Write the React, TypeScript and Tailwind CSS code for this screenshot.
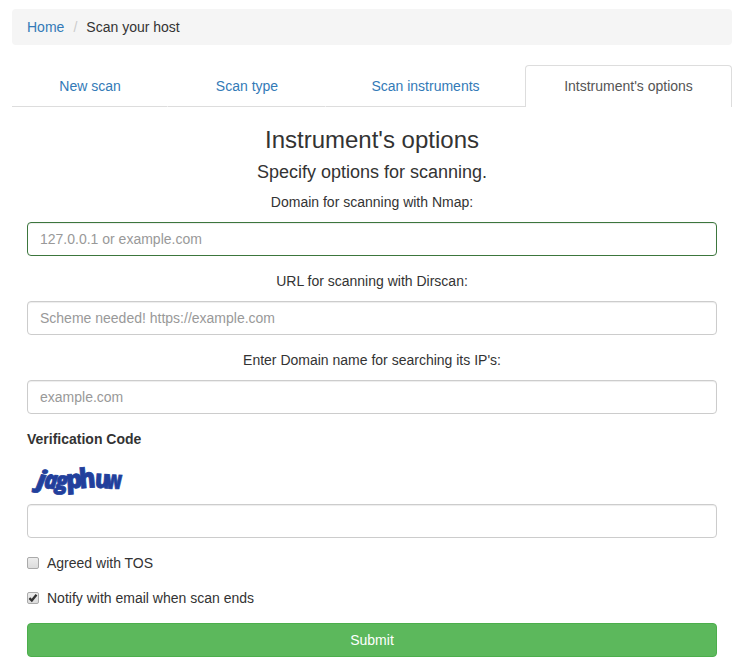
import React from 'react';

const tabs = [
  { label: 'New scan', width: 'w-[156px]', last: false },
  { label: 'Scan type', width: 'w-[158px]', last: false },
  { label: 'Scan instruments', width: 'w-[199px]', last: true },
];

const captcha = [
  { ch: 'j', t: 'translate(9 33) rotate(8) scale(1.2 1.08)', italic: true },
  { ch: 'a', t: 'translate(16.5 34) rotate(6) scale(1 1.15)', italic: true },
  { ch: 'g', t: 'translate(28 34.5) rotate(4) scale(1.02 1.1)', italic: true },
  { ch: 'p', t: 'translate(39.5 34.5) rotate(-3) scale(1.15 1.15)', italic: false },
  { ch: 'h', t: 'translate(53 34.5) rotate(-5) scale(1.1 1.25)', italic: false },
  { ch: 'u', t: 'translate(67.5 33.5) rotate(4) scale(1 1.15)', italic: false },
  { ch: 'w', t: 'translate(78.5 34.5) rotate(2) scale(.82 1.15)', italic: false },
];

function Field({ label, placeholder, success }: { label: string; placeholder: string; success?: boolean }) {
  return (
    <label className="mb-[15px] block text-center">
      <span className="mb-[10px] block">{label}</span>
      <input
        placeholder={placeholder}
        className={`block h-[34px] w-full rounded-[4px] border px-3 py-[6px] text-[14px] leading-5 shadow-[inset_0_1px_1px_rgba(0,0,0,0.075)] outline-none placeholder:text-[#999] ${
          success ? 'border-[#3c763d]' : 'border-[#ccc]'
        }`}
      />
    </label>
  );
}

function Check({ label, checked }: { label: string; checked?: boolean }) {
  return (
    <label className="mb-[15px] flex h-5 items-center">
      <span className="mr-2 flex h-3 w-3 shrink-0 items-center justify-center rounded-[2px] border border-[#aaa] bg-linear-to-b from-[#ededed] to-[#dcdcdc]">
        {checked && (
          <svg viewBox="0 0 10 10" className="h-[10px] w-[10px]">
            <path d="M1.4 5.2 L3.8 7.5 L8.5 1.8" fill="none" stroke="#333" strokeWidth="2.3" />
          </svg>
        )}
      </span>
      {label}
    </label>
  );
}

export default function App() {
  return (
    <main className="h-[672px] w-[746px] overflow-hidden bg-white pt-[9px] pl-3 font-['Liberation_Sans',Arial,sans-serif] text-[14px] leading-5 text-[#333]">
      <div className="w-[720px]">
        <nav className="mb-5 flex h-9 items-center rounded-[4px] bg-[#f5f5f5] px-[15px]">
          <a className="text-[#337ab7]">Home</a>
          <span className="w-[22px] text-center text-[#ccc]">/</span>
          <span>Scan your host</span>
        </nav>
        <div className="flex h-[42px]">
          {tabs.map((t) => (
            <div key={t.label} className={`${t.width} flex`}>
              <a className="flex-1 border-b border-[#ddd] pt-[11px] text-center text-[#337ab7]">{t.label}</a>
              {!t.last && <span className="-ml-px w-px border-b border-[#eee]" />}
            </div>
          ))}
          <a className="w-[207px] rounded-t-[4px] border border-b-0 border-[#ddd] pt-[10px] text-center text-[#555]">
            Intstrument's options
          </a>
        </div>
        <form className="px-[15px] pt-[20px]">
          <h3 className="mb-[9px] text-center text-[24px] leading-[26px]">Instrument's options</h3>
          <h4 className="mb-[10px] text-center text-[18px] leading-[20px]">Specify options for scanning.</h4>
          <Field label="Domain for scanning with Nmap:" placeholder="127.0.0.1 or example.com" success />
          <Field label="URL for scanning with Dirscan:" placeholder="Scheme needed! https://example.com" />
          <Field label="Enter Domain name for searching its IP's:" placeholder="example.com" />
          <b className="block">Verification Code</b>
          <svg width="100" height="55" viewBox="0 -5 100 55" className="block">
            <g fill="#223f9c" stroke="#223f9c" strokeWidth="0.7" fontFamily="Open Sans" fontWeight="800" fontSize="22">
              {captcha.map((c) => (
                <text key={c.ch} transform={c.t} fontStyle={c.italic ? 'italic' : 'normal'}>{c.ch}</text>
              ))}
            </g>
          </svg>
          <input className="mb-[15px] block h-[34px] w-full rounded-[4px] border border-[#ccc] px-3 shadow-[inset_0_1px_1px_rgba(0,0,0,0.075)] outline-none" />
          <Check label="Agreed with TOS" />
          <Check label="Notify with email when scan ends" checked />
          <button type="button" className="block h-[34px] w-full rounded-[4px] border border-[#4cae4c] bg-[#5cb85c] text-center text-white">
            Submit
          </button>
        </form>
      </div>
    </main>
  );
}
